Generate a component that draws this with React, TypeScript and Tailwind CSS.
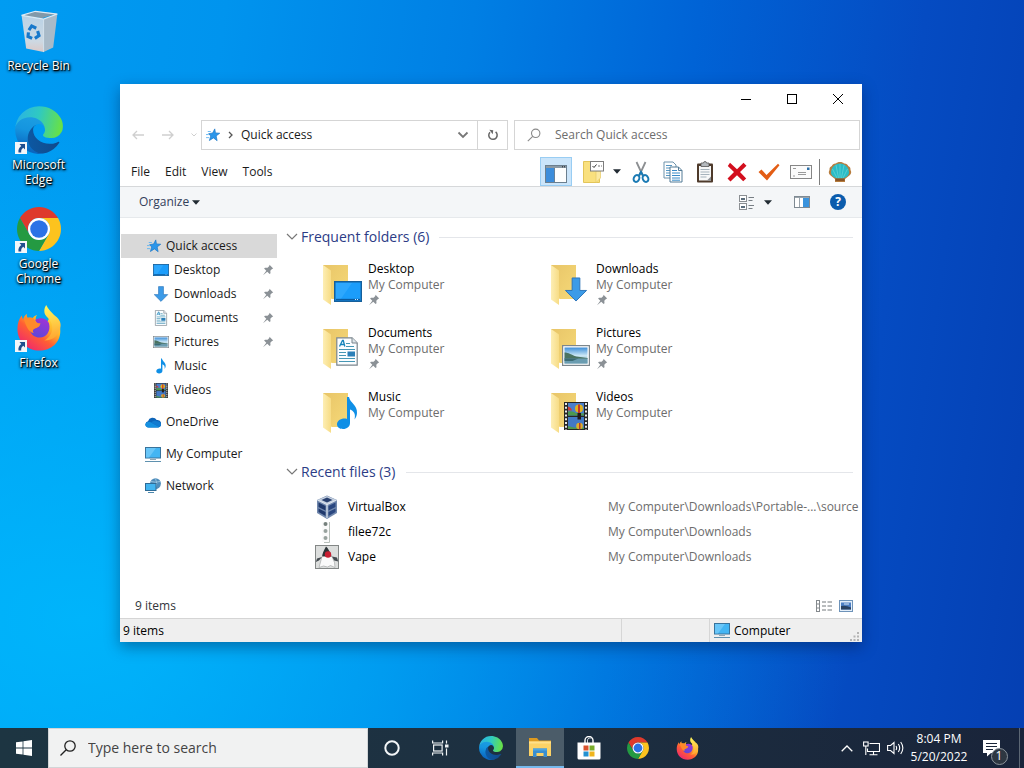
import { useId } from "react";
import type { ReactNode } from "react";

type IconProps = { className?: string };

/* ---------- Brand icons ---------- */

function EdgeIcon({ className }: IconProps) {
  const id = useId();
  return (
    <svg viewBox="4 4 257 257" className={className} aria-hidden="true">
      <defs>
        <linearGradient id={`${id}a`} x1="64" y1="177" x2="241" y2="177" gradientUnits="userSpaceOnUse">
          <stop offset="0" stopColor="#0c59a4" />
          <stop offset="1" stopColor="#114a8b" />
        </linearGradient>
        <linearGradient id={`${id}b`} x1="110" y1="70" x2="70" y2="240" gradientUnits="userSpaceOnUse">
          <stop offset="0" stopColor="#1b9de2" />
          <stop offset="0.4" stopColor="#1595df" />
          <stop offset="1" stopColor="#0a66c0" />
        </linearGradient>
        <linearGradient id={`${id}c`} x1="20" y1="70" x2="245" y2="120" gradientUnits="userSpaceOnUse">
          <stop offset="0" stopColor="#2bb5e0" />
          <stop offset="0.45" stopColor="#2fc9c2" />
          <stop offset="1" stopColor="#66e04a" />
        </linearGradient>
      </defs>
      <path fill={`url(#${id}a)`} d="M235.68 195.46a93.73 93.73 0 0 1-10.54 4.71 101.87 101.87 0 0 1-35.9 6.46c-47.32 0-88.54-32.55-88.54-74.32A31.48 31.48 0 0 1 117.13 105c-42.8 1.8-53.8 46.4-53.8 72.53 0 73.88 68.09 81.37 82.76 81.37 7.91 0 19.84-2.3 27-4.56l1.31-.44a128.34 128.34 0 0 0 66.6-52.8 4 4 0 0 0-5.32-5.64Z" />
      <path fill={`url(#${id}b)`} d="M110.34 246.34A79.2 79.2 0 0 1 87.6 225a80.72 80.72 0 0 1 29.53-120c3.12-1.47 8.45-4.13 15.54-4a32.35 32.35 0 0 1 25.69 13 31.88 31.88 0 0 1 6.36 18.66c0-.21 24.46-79.6-80-79.6-43.9 0-80 41.66-80 78.21a130.15 130.15 0 0 0 12.11 56 128 128 0 0 0 156.38 67.11 75.55 75.55 0 0 1-62.78-8Z" />
      <path fill={`url(#${id}c)`} d="M156.94 153.78c-.81 1.05-3.3 2.5-3.3 5.66 0 2.61 1.7 5.12 4.72 7.23 14.38 10 41.49 8.68 41.56 8.68a59.56 59.56 0 0 0 30.27-8.35 61.38 61.38 0 0 0 30.43-52.88c.26-22.41-8-37.31-11.34-43.91C228.09 28.76 182.35 4.7 132.61 4.7A128 128 0 0 0 4.61 130.9c.48-36.54 36.8-66.05 80-66.05 3.5 0 23.46.34 42 10.07 16.34 8.58 24.9 18.94 30.85 29.21 6.18 10.67 7.28 24.15 7.28 29.52s-2.74 13.33-7.8 19.91Z" />
    </svg>
  );
}

function ChromeIcon({ className }: IconProps) {
  return (
    <svg viewBox="0 0 48 48" className={className} aria-hidden="true">
      <path fill="#de3a2c" d="M3.22 12A24 24 0 0 1 44.78 12L24 12A12 12 0 0 0 13.61 30Z" />
      <path fill="#fcc31e" d="M44.78 12A24 24 0 0 1 24 48L34.39 30A12 12 0 0 0 24 12Z" />
      <path fill="#249a42" d="M24 48A24 24 0 0 1 3.22 12L13.61 30A12 12 0 0 0 34.39 30Z" />
      <circle cx="24" cy="24" r="12" fill="#fff" />
      <circle cx="24" cy="24" r="9.6" fill="#2b72e6" />
    </svg>
  );
}

function FirefoxIcon({ className }: IconProps) {
  const id = useId();
  return (
    <svg viewBox="0 0 48 48" className={className} aria-hidden="true">
      <defs>
        <linearGradient id={`${id}a`} x1="38" y1="6" x2="10" y2="44" gradientUnits="userSpaceOnUse">
          <stop offset="0" stopColor="#fff04a" />
          <stop offset="0.35" stopColor="#ffb52a" />
          <stop offset="0.62" stopColor="#ff5f33" />
          <stop offset="1" stopColor="#f02a6c" />
        </linearGradient>
        <linearGradient id={`${id}b`} x1="30" y1="14" x2="20" y2="34" gradientUnits="userSpaceOnUse">
          <stop offset="0" stopColor="#a033d6" />
          <stop offset="1" stopColor="#5a48d8" />
        </linearGradient>
        <linearGradient id={`${id}c`} x1="36" y1="2" x2="42" y2="40" gradientUnits="userSpaceOnUse">
          <stop offset="0" stopColor="#fff35a" />
          <stop offset="1" stopColor="#ff9a2b" />
        </linearGradient>
      </defs>
      <path fill={`url(#${id}a)`} d="M6 11c.3 1.6.8 3 1.4 4C8 12.600 9.300 10.400 11.200 9c-.1 2 .3 3.500 1.200 4.800 1.600-.5 3.500-.5 5-.2 1.200-1.600 2.800-2.700 4.600-3.100-1 1.200-1.500 2.500-1.500 3.900 2 1.500 5 1.500 7.500 3 6 2 9-4 3-12.400 5 2 8 5 9.500 8.500 2 1 4.500 5 5.300 9.500C48.500 37 38 47.500 24.500 47.500 11.500 47.500 1.500 38 1.500 25c0-5.500 1.500-10.500 4.500-14Z" />
      <path fill={`url(#${id}c)`} d="M31.500 0c-2 3-2.700 7-1 10.300 1.200 2.300 4 3.900 5.500 6.700 4 7 1.500 16-6.500 20 10 0 14.500-6 16.500-12C48.500 15 42 13 38.500 9c-2.700-2.800-5.200-5-7-9Z" />
      <path fill={`url(#${id}b)`} d="M20 15.500c6-3.500 13-1 14.500 4C36.500 27 31.500 34 25 34c-6.500 0-11-4.500-10.500-10 3 1.500 7.500.5 10-2 .4-2-3.500-2.500-4.500-6.500Z" />
      <path fill="#ff8a2a" d="M8 14c3-1.500 8-1.500 11 .5.2 3 2.200 4.200 6.500 4.500 0 2.500-2.500 3.800-5.500 5.300-2.500 1.200-3 3-1.500 5-6-1-8.500-9-10.500-15.300Z" />
    </svg>
  );
}

function RecycleIcon({ className }: IconProps) {
  const id = useId();
  return (
    <svg viewBox="0 0 48 48" className={className} aria-hidden="true">
      <defs>
        <linearGradient id={id} x1="0" y1="0" x2="0" y2="1">
          <stop offset="0" stopColor="#b9d2e6" />
          <stop offset="0.7" stopColor="#cdd9e3" />
          <stop offset="1" stopColor="#dbc9c8" />
        </linearGradient>
      </defs>
      <path d="M5 7 20 2.500 44 5l-17 5Z" fill="#8199a9" />
      <path d="M5 7 29 11v36L10 43Z" fill={`url(#${id})`} />
      <path d="M29 11 44 5.500 39.500 42 29 47Z" fill="#a9bac8" />
      <path d="M5 7 20 2.500 44 5.500 29 11Z" fill="none" stroke="#dceaf4" strokeWidth="1.300" />
      <path d="M29 11v36" stroke="#dde6ed" strokeWidth="1" />
      <g fill="none" stroke="#1778cb" strokeWidth="3.400">
        <path d="m13 23 3-4.500 5 2.500" />
        <path d="m22.500 24 1.500 5-4.500 3" />
        <path d="m16.500 32-4.500-2 .5-4.500" />
      </g>
    </svg>
  );
}

/* ---------- Shell icons ---------- */

function Star({ className }: IconProps) {
  return (
    <svg viewBox="0 0 16 16" className={className} aria-hidden="true">
      <path d="m10 1 .8 4.600 4.900.4-4.100 3 1.100 5.500-4.200-3.200-4.600 3 1.500-5.200L3 6.500l4.600-.8Z" fill="#2b96ea" stroke="#1b78c8" strokeWidth=".8" />
      <path d="M2 4h3.500M0 7.500h3M0 11h3.500" stroke="#5bb4f2" strokeWidth="1" />
    </svg>
  );
}

function Pin({ className }: IconProps) {
  return (
    <svg viewBox="0 0 12 12" className={className} aria-hidden="true">
      <path d="m7.500.8 3.700 3.700-1.200.4-1.700 1.800.2 2.500-.9.900L5.300 7.800 1 11.200l3.300-4.400-2.200-2.200.9-.9 2.600.1L7.300 2Z" fill="#8b9196" />
    </svg>
  );
}

function DesktopGlyph({ className }: IconProps) {
  return (
    <svg viewBox="0 0 28 20" preserveAspectRatio="none" className={className} aria-hidden="true">
      <rect x=".7" y=".7" width="26.600" height="18.600" fill="#1b9dfb" stroke="#155f9b" strokeWidth="1.400" />
      <path d="M2 2h16L7 17H2Z" fill="#3badff" opacity=".6" />
      <path d="M2 17.700h24" stroke="#0b5a9e" strokeWidth="1.400" />
      <path d="M21 17.700h1M23 17.700h1" stroke="#cfeaff" strokeWidth="1" />
    </svg>
  );
}

function DownGlyph({ className }: IconProps) {
  return (
    <svg viewBox="0 0 24 26" className={className} aria-hidden="true">
      <path d="M8 1h8v13h7L12 25 1 14h7Z" fill="#3c9be8" stroke="#2c74b8" strokeWidth="1" />
    </svg>
  );
}

function DocGlyph({ className }: IconProps) {
  return (
    <svg viewBox="0 0 22 29" className={className} aria-hidden="true">
      <path d="M.8.8H16l5.200 5.200v22.200H.8Z" fill="#fbfdff" stroke="#7b858d" strokeWidth="1.200" />
      <path d="M16 .8V6h5.200" fill="#dfe6ea" stroke="#7b858d" />
      <path d="m3.500 9.500 3-6h.8l1.500 6M4.800 7.500h3.500" stroke="#1583ba" strokeWidth="1.300" fill="none" />
      <path d="M10 6.500h4M10 9.500h8M3 12.500h16M3 15.500h7M3 18.500h7M3 21.500h16M3 24.500h16" stroke="#4697b5" strokeWidth="1.200" />
      <rect x="11.500" y="14.500" width="7.500" height="5" fill="#2b7fb8" />
    </svg>
  );
}

function PictureGlyph({ className }: IconProps) {
  const id = useId();
  return (
    <svg viewBox="0 0 28 21" preserveAspectRatio="none" className={className} aria-hidden="true">
      <defs>
        <linearGradient id={id} x1="0" y1="0" x2="0" y2="1">
          <stop offset="0" stopColor="#3d8ed8" />
          <stop offset=".5" stopColor="#c9e6f5" />
          <stop offset="1" stopColor="#8bb6c4" />
        </linearGradient>
      </defs>
      <rect x=".6" y=".6" width="26.800" height="19.800" fill="#fff" stroke="#7c868c" strokeWidth="1.200" />
      <rect x="2.500" y="2.500" width="23" height="16" fill={`url(#${id})`} />
      <path d="M2.500 7.500c4 0 7 2.500 12 4l11 1.500v1H2.500Z" fill="#4a7361" />
      <path d="M2.500 13.500h23v5h-23Z" fill="#6a9cb0" />
      <path d="M2.500 13.500h14l-6 2.500h-8Z" fill="#3c6b74" />
    </svg>
  );
}

function MusicGlyph({ className }: IconProps) {
  return (
    <svg viewBox="0 0 22 34" className={className} aria-hidden="true">
      <path d="M11 1h2c1 6 8.500 8 8 16-.1 2.500-1 4.500-2.500 6.500 1.500-6-1-8.500-4.500-10V27c0 3.500-3 6-7 6-3.500 0-6-1.800-6-4.700 0-3.500 3.500-5.800 7.500-5.800 1 0 1.800.1 2.500.4Z" fill="#0f8fe6" />
    </svg>
  );
}

function VideoGlyph({ className }: IconProps) {
  return (
    <svg viewBox="0 0 24 28" preserveAspectRatio="none" className={className} aria-hidden="true">
      <rect width="24" height="28" fill="#262626" />
      <rect x="4" y="1" width="16" height="12.500" fill="#4a7fcb" />
      <rect x="4" y="15" width="16" height="12" fill="#4379c6" />
      <path d="M4 9.500q5-1 8 1.500l8 .5v2H4ZM4 24l6 1.500h10V27H4Z" fill="#4d9950" />
      <path d="M4 4.500q3.500 1 4 4H4Z" fill="#ce3a34" />
      <circle cx="15" cy="6.500" r="4" fill="#e2b21f" />
      <path d="M14 2.500h2v9h-2Z" fill="#c3362b" />
      <path d="M13.500 11h3.500v6.500h-3.500Z" fill="#221a1a" />
      <circle cx="15.500" cy="24" r="3.300" fill="#ddb02b" />
      <path d="M15 21h1.500v6H15Z" fill="#b83830" />
      <path d="M2 1v27M22 1v27" stroke="#e9e9e9" strokeWidth="2" strokeDasharray="2 1.800" />
    </svg>
  );
}

function CloudGlyph({ className }: IconProps) {
  return (
    <svg viewBox="0 0 16 11" className={className} aria-hidden="true">
      <path d="M3.500 10.500A3.200 3.200 0 0 1 3 4.200 4.800 4.800 0 0 1 11.700 3 3.800 3.800 0 0 1 13 10.500Z" fill="#0d64b8" />
      <path d="M3.500 10.500C1.500 10.500 0 9 .2 7.200c1-2.800 4-3.200 6-1.700l8.300 4.500c-.5.4-1 .5-1.700.5Z" fill="#1590e0" />
      <path d="M6 5.500c2-2 4.500-2 5.700-1.300 2.300-.2 4.300 1.300 4.300 3.300 0 1.200-.6 2-1.500 2.500Z" fill="#127bd0" />
    </svg>
  );
}

function ComputerGlyph({ className }: IconProps) {
  return (
    <svg viewBox="0 0 16 15" className={className} aria-hidden="true">
      <rect x=".5" y=".5" width="15" height="10.500" fill="#43b5f3" stroke="#38739c" />
      <path d="M1 1h10L4 10.500H1Z" fill="#79cdf9" opacity=".7" />
      <path d="M5 12.500h6" stroke="#8fa7b5" />
      <path d="M0 14.500h16" stroke="#5f91af" />
    </svg>
  );
}

function NetworkGlyph({ className }: IconProps) {
  return (
    <svg viewBox="0 0 16 16" className={className} aria-hidden="true">
      <circle cx="10.500" cy="5.600" r="5.400" fill="#4f8dbb" />
      <path d="M6 3.500q4.500 1.500 9 0M10.500.5q2.500 5 0 10" stroke="#a5cbe4" strokeWidth=".8" fill="none" />
      <rect x=".5" y="5.500" width="10.500" height="7" fill="#42b4f0" stroke="#2e6b96" />
      <path d="M3 14.500h6" stroke="#4b87ad" />
    </svg>
  );
}

function FolderIcon({ children }: { children: ReactNode }) {
  const id = useId();
  return (
    <span className="relative block h-12 w-10 shrink-0">
      <svg viewBox="0 0 40 48" className="size-full" aria-hidden="true">
        <defs>
          <linearGradient id={`${id}a`} x1="0" y1="0" x2="1" y2="1">
            <stop offset="0" stopColor="#e8c568" />
            <stop offset="1" stopColor="#f6d978" />
          </linearGradient>
          <linearGradient id={`${id}b`} x1="0" y1="0" x2="1" y2="0">
            <stop offset="0" stopColor="#fdeeb4" />
            <stop offset="1" stopColor="#f7dc85" />
          </linearGradient>
        </defs>
        <path d="M1 4h25v34H10L1 34Z" fill={`url(#${id}a)`} />
        <path d="M1 4 9 9.500V44l-8-5.500Z" fill={`url(#${id}b)`} />
      </svg>
      {children}
    </span>
  );
}

function Caret({ className = "" }: IconProps) {
  return (
    <svg viewBox="0 0 8 5" className={`h-[5px] w-2 ${className}`} aria-hidden="true">
      <path d="M0 .3h8L4 4.800Z" fill="#222b33" />
    </svg>
  );
}

function GroupChevron() {
  return (
    <svg viewBox="0 0 12 8" className="h-2 w-3 shrink-0" aria-hidden="true">
      <path d="m1 1 5 5 5-5" fill="none" stroke="#777" strokeWidth="1.200" />
    </svg>
  );
}

/* ---------- Desktop ---------- */

function Shortcut({ label, icon, linked }: { label: string; icon: ReactNode; linked?: boolean }) {
  return (
    <button type="button" className="flex h-[99px] w-[77px] flex-col items-center gap-[3px] text-xs leading-[15px] text-white">
      <span className="relative flex size-12 shrink-0 items-center justify-center">
        {icon}
        {linked && (
          <svg viewBox="0 0 12 12" className="absolute bottom-0 left-0 size-3" aria-hidden="true">
            <rect width="12" height="12" fill="#f3f6f9" />
            <path d="M4.500 2H10v5.500L8.300 5.800C6.500 7 6 8.500 6.200 10.500H3.500C3 7.500 4.200 5.500 6.300 3.900Z" fill="#1f4f8f" />
          </svg>
        )}
      </span>
      <span className="w-[66px] text-center [text-shadow:1px_1px_1px_#000,1px_1px_3px_#000,0_1px_3px_rgba(0,0,0,0.8)]">{label}</span>
    </button>
  );
}

/* ---------- Explorer window ---------- */

function TitleBar() {
  return (
    <div className="flex h-[30px] items-center justify-end pr-px">
      <button type="button" aria-label="Minimize" className="flex h-full w-[46px] items-center justify-center">
        <svg viewBox="0 0 10 10" className="size-2.5"><path d="M0 5.500h10" stroke="#000" /></svg>
      </button>
      <button type="button" aria-label="Maximize" className="flex h-full w-[46px] items-center justify-center">
        <svg viewBox="0 0 10 10" className="size-2.5"><rect x=".5" y=".5" width="9" height="9" fill="none" stroke="#000" /></svg>
      </button>
      <button type="button" aria-label="Close" className="flex h-full w-[46px] items-center justify-center">
        <svg viewBox="0 0 10 10" className="size-2.5"><path d="m0 0 10 10M10 0 0 10" stroke="#000" /></svg>
      </button>
    </div>
  );
}

function AddressRow() {
  return (
    <div className="flex h-[42px] items-center pr-0.5 pl-3">
      <button type="button" aria-label="Back" className="flex w-3 justify-center">
        <svg viewBox="0 0 12 10" className="h-2.5 w-3"><path d="M12 5H1M5 1 1 5l4 4" fill="none" stroke="#cfcfcf" strokeWidth="1.300" /></svg>
      </button>
      <button type="button" aria-label="Forward" className="ml-[18px] flex w-3 justify-center">
        <svg viewBox="0 0 12 10" className="h-2.5 w-3"><path d="M0 5h11M7 1l4 4-4 4" fill="none" stroke="#cfcfcf" strokeWidth="1.300" /></svg>
      </button>
      <button type="button" aria-label="Recent locations" className="ml-4 flex w-[7px] justify-center">
        <svg viewBox="0 0 6 4" className="h-1 w-1.5"><path d="m.5.5 2.500 2.500L5.500.5" fill="none" stroke="#cfcfcf" /></svg>
      </button>
      <div className="ml-1 flex h-[30px] flex-[305_1_0%] border border-[#d5d5d5]">
        <div className="flex grow items-center pl-1">
          <Star className="size-3.5" />
          <svg viewBox="0 0 5 8" className="ml-2 h-2 w-[5px]" aria-hidden="true"><path d="m1 1 3 3-3 3" fill="none" stroke="#555" strokeWidth="1.300" /></svg>
          <a href="#quick-access" className="ml-2">Quick access</a>
          <button type="button" aria-label="Previous locations" className="mr-2 ml-auto">
            <svg viewBox="0 0 12 8" className="h-2 w-3"><path d="m1.500 1.500 4.500 4.500 4.500-4.500" fill="none" stroke="#777" strokeWidth="1.800" /></svg>
          </button>
        </div>
        <button type="button" aria-label="Refresh" className="flex w-[30px] items-center justify-center border-l border-[#d5d5d5]">
          <svg viewBox="0 0 12 12" className="size-3">
            <path d="M3 3.200A4.200 4.200 0 1 0 8.600 2.900" fill="none" stroke="#666" strokeWidth="1.500" />
            <path d="M2 1h4v4Z" fill="#666" transform="rotate(8 4 3)" />
          </svg>
        </button>
      </div>
      <div className="ml-1.5 flex h-[30px] flex-[332_1_0%] items-center border border-[#d5d5d5] pl-3">
        <svg viewBox="0 0 14 14" className="size-3.5 shrink-0" aria-hidden="true">
          <circle cx="8.700" cy="5.300" r="4.200" fill="none" stroke="#8a8a8a" strokeWidth="1.100" />
          <path d="M5.700 8.300.8 13.200" stroke="#8a8a8a" strokeWidth="1.100" />
        </svg>
        <input type="search" aria-label="Search Quick access" placeholder="Search Quick access" className="ml-3.5 min-w-0 grow bg-transparent outline-none placeholder:text-[#6d6d6d]" />
      </div>
    </div>
  );
}

function ToolButton({ label, children }: { label: string; children: ReactNode }) {
  return (
    <button type="button" aria-label={label} className="flex h-full w-8 items-center justify-center">
      {children}
    </button>
  );
}

function MenuBar() {
  return (
    <div className="flex h-[31px] items-center justify-between border-b border-[#d6d8da] pt-px pr-1.5 pl-[11px]">
      <div className="flex gap-[15px]">
        {["File", "Edit", "View", "Tools"].map((item) => (
          <button type="button" key={item}>{item}</button>
        ))}
      </div>
      <div className="flex h-[29px] items-center">
        <button type="button" aria-label="Navigation pane" aria-pressed="true" className="flex h-full w-8 items-center justify-center border border-[#99cdf3] bg-[#cbe5fa]">
          <svg viewBox="0 0 22 18" className="mt-1 h-[18px] w-[22px]">
            <rect x=".5" y=".5" width="21" height="17" fill="#fdfefe" stroke="#6b7f8f" />
            <path d="M1 2h20" stroke="#8b9aa5" strokeWidth="2" />
            <rect x="1" y="3" width="8" height="14" fill="#3c8ddb" />
            <path d="M9.500 3v14" stroke="#67829a" />
            <path d="M17 1.800h1M19 1.800h1" stroke="#222" />
          </svg>
        </button>
        <button type="button" aria-label="Folder options" className="flex h-full w-[53px] items-center pl-[11px]">
          <svg viewBox="0 0 21 22" className="h-[22px] w-[21px]">
            <path d="M.5.500h9v9h7v12H.5Z" fill="#f9e07e" stroke="#e3c559" />
            <path d="M13 10h4.500v7L13 21.500Z" fill="#fbe9a0" stroke="#e6ca65" strokeWidth=".7" />
            <rect x="7.500" y=".5" width="13" height="9.500" fill="#fff" stroke="#7d7d7d" />
            <path d="m9.500 5 1.500 1.500 2.500-3" fill="none" stroke="#333" />
            <path d="M15 5h2M18 5h1" stroke="#777" />
          </svg>
          <Caret className="ml-[9px]" />
        </button>
        <ToolButton label="Cut">
          <svg viewBox="0 0 18 22" className="h-[22px] w-[18px]">
            <path d="m4.500 1 6.500 14M13.500 1 7 15" stroke="#8c8f92" strokeWidth="1.800" />
            <ellipse cx="4.500" cy="17.500" rx="2.700" ry="3.500" fill="none" stroke="#1a7ab4" strokeWidth="2" transform="rotate(25 4.500 17.500)" />
            <ellipse cx="13.500" cy="17.500" rx="2.700" ry="3.500" fill="none" stroke="#1a7ab4" strokeWidth="2" transform="rotate(-25 13.500 17.500)" />
            <path d="M7 14.500 9 11l2 3.500" fill="none" stroke="#1a7ab4" strokeWidth="2" />
          </svg>
        </ToolButton>
        <ToolButton label="Copy">
          <svg viewBox="0 0 20 22" className="h-[22px] w-5">
            <path d="M1 1h9l3 3v13H1Z" fill="#fff" stroke="#6f93ab" />
            <path d="M3 4.500h6M3 7h8M3 9.500h8M3 12h8M3 14.500h8" stroke="#5597c4" />
            <path d="M7 6h8.500L19 9.500V21H7Z" fill="#fff" stroke="#537b96" />
            <path d="M15.500 6v3.500H19" fill="none" stroke="#537b96" />
            <path d="M9 9.500h5M9 12h8M9 14.500h8M9 17h8M9 19.200h8" stroke="#398bc7" />
          </svg>
        </ToolButton>
        <ToolButton label="Paste">
          <svg viewBox="0 0 18 22" className="h-[22px] w-[18px]">
            <rect x="1" y="2.500" width="16" height="19" rx="1" fill="#4e3a2b" />
            <rect x="3" y="5" width="12" height="14.500" fill="#f7f8f8" />
            <path d="M5 2h2.500a1.500 1.500 0 0 1 3 0H13v3.500H5Z" fill="#b4b9bd" stroke="#555" strokeWidth=".8" />
            <path d="M4.500 8.500h9M4.500 11h9M4.500 13.500h9M4.500 16h6" stroke="#a6b3bc" />
            <path d="m11 19.500 4-4v4Z" fill="#8d9195" />
          </svg>
        </ToolButton>
        <ToolButton label="Delete">
          <svg viewBox="0 0 20 20" className="size-5">
            <path d="m3 .8 7 6.500 6.500-6.500 3 3L13 10l6.200 6.500-3 2.800-6.200-6-6.500 6.200-3-3L7 10 .8 4Z" fill="#d30f1e" />
          </svg>
        </ToolButton>
        <ToolButton label="Properties">
          <svg viewBox="0 0 22 18" className="h-[18px] w-[22px]">
            <path d="M.5 9 3.500 6.500l5 5.500L20 .8l1.500 1.500L9 17.500Z" fill="#e35d14" />
          </svg>
        </ToolButton>
        <ToolButton label="Email">
          <svg viewBox="0 0 22 14" className="h-3.5 w-[22px]">
            <rect x=".5" y=".5" width="21" height="13" fill="#fbfbfb" stroke="#868686" />
            <path d="M3 3.500h3M8 7.500h8M8 9.500h8M3 11h2" stroke="#9a9a9a" />
            <rect x="17" y="2.500" width="2.500" height="2.500" fill="#2b6fa8" />
          </svg>
        </ToolButton>
        <span className="mr-1 ml-0.5 h-[26px] w-px bg-[#7f7f7f]" />
        <ToolButton label="Classic shell settings">
          <svg viewBox="0 0 24 22" className="h-[22px] w-6">
            <path d="M12 1c2 0 3 .5 4 1.500 2-.3 3.500.8 4.200 2.500 1.800.7 2.500 2.200 2.300 4 1 1.500 1 3.500-.5 5L17 18v3H7v-3L2 14C.5 12.500.5 10.500 1.500 9 1.300 7.200 2 5.700 3.800 5 4.500 3.300 6 2.200 8 2.500 9 1.500 10 1 12 1Z" fill="#b77d3e" />
            <path d="M12 2.500c5 0 9 4 9 9 0 3-3 5-6 6H9c-3-1-6-3-6-6 0-5 4-9 9-9Z" fill="#2bbcc6" />
            <path d="M12 3v14M8 4l2.500 13M16 4l-2.500 13M4.500 8 9 17M19.500 8 15 17" stroke="#63d2d6" strokeWidth=".8" />
            <path d="M7.500 17.500h9v2.500h-9Z" fill="#8a5526" />
          </svg>
        </ToolButton>
      </div>
    </div>
  );
}

function CommandBar() {
  return (
    <div className="flex h-[31px] items-center justify-between border-b border-[#e6e9ec] bg-[#f4f6f8] pr-4 pl-[19px]">
      <button type="button" className="flex items-center gap-[3px] text-[#33405a]">
        Organize
        <Caret />
      </button>
      <div className="flex items-center">
        <button type="button" aria-label="Change view" className="flex items-center">
          <svg viewBox="0 0 15 15" className="size-[15px]">
            <rect x=".5" y=".5" width="7" height="6" fill="#fff" stroke="#8b8f93" />
            <rect x=".5" y="8.500" width="7" height="6" fill="#fff" stroke="#8b8f93" />
            <path d="M2 3h4v2H2ZM2 11h4v2H2Z" fill="#5b6d7c" />
            <path d="M9.500 2.500H15M9.500 5.500h4M9.500 10.500H15M9.500 13.500h4" stroke="#777e84" />
          </svg>
          <Caret className="ml-2.5" />
        </button>
        <button type="button" aria-label="Show the preview pane" className="ml-[22px]">
          <svg viewBox="0 0 16 12" className="h-3 w-4">
            <rect x=".5" y=".5" width="15" height="11" fill="#fff" stroke="#7f8a93" />
            <path d="M1 1.500h14" stroke="#9aa4ac" />
            <path d="M5.500 2v9" stroke="#9aa4ac" />
            <rect x="9" y="2" width="6" height="9" fill="#3a93dd" />
          </svg>
        </button>
        <button type="button" aria-label="Help" className="ml-5 flex size-4 items-center justify-center rounded-full bg-[#0b5cad] text-xs font-bold text-white">
          ?
        </button>
      </div>
    </div>
  );
}

const places = [
  { name: "Desktop", pinned: true, icon: <DesktopGlyph className="h-3 w-4" /> },
  { name: "Downloads", pinned: true, icon: <DownGlyph className="h-4 w-4" /> },
  { name: "Documents", pinned: true, icon: <DocGlyph className="h-4 w-4" /> },
  { name: "Pictures", pinned: true, icon: <PictureGlyph className="h-3 w-4" /> },
  { name: "Music", pinned: false, icon: <MusicGlyph className="h-4 w-4" /> },
  { name: "Videos", pinned: false, icon: <VideoGlyph className="h-[15px] w-3.5" /> },
];

const roots = [
  { name: "OneDrive", icon: <CloudGlyph className="h-[11px] w-4" /> },
  { name: "My Computer", icon: <ComputerGlyph className="h-[15px] w-4" /> },
  { name: "Network", icon: <NetworkGlyph className="size-4" /> },
];

function Sidebar() {
  return (
    <nav aria-label="Navigation pane" className="w-[157px] shrink-0 pt-4 pl-px">
      <a href="#quick-access" className="flex h-6 items-center gap-[5px] bg-[#d9d9d9] pl-[26px]">
        <Star className="size-3.5" />
        Quick access
      </a>
      <ul>
        {places.map((place) => (
          <li key={place.name}>
            <a href={`#${place.name}`} className="flex h-6 items-center pr-[3px] pl-8">
              <span className="flex w-4 justify-center">{place.icon}</span>
              <span className="ml-[5px]">{place.name}</span>
              {place.pinned && <Pin className="ml-auto size-3" />}
            </a>
          </li>
        ))}
      </ul>
      <ul className="mt-2 flex flex-col gap-2">
        {roots.map((root) => (
          <li key={root.name}>
            <a href={`#${root.name}`} className="flex h-6 items-center gap-[5px] pl-6">
              {root.icon}
              {root.name}
            </a>
          </li>
        ))}
      </ul>
    </nav>
  );
}

const folders = [
  { name: "Desktop", pinned: true, icon: <DesktopGlyph className="absolute right-0 bottom-[7px] h-[21px] w-7" /> },
  { name: "Downloads", pinned: true, icon: <DownGlyph className="absolute right-0.5 bottom-[7px] h-[25px] w-6" /> },
  { name: "Documents", pinned: true, icon: <DocGlyph className="absolute right-1 bottom-[7px] h-[29px] w-[22px]" /> },
  { name: "Pictures", pinned: true, icon: <PictureGlyph className="absolute right-0 bottom-[7px] h-[21px] w-7" /> },
  { name: "Music", pinned: false, icon: <MusicGlyph className="absolute right-1 bottom-[7px] h-[34px] w-[22px]" /> },
  { name: "Videos", pinned: false, icon: <VideoGlyph className="absolute right-0.5 bottom-[7px] h-7 w-6" /> },
];

const files = [
  {
    name: "VirtualBox",
    path: "My Computer\\Downloads\\Portable-...\\source",
    icon: (
      <svg viewBox="0 0 24 24" className="size-6" aria-hidden="true">
        <path d="M12 .5 22 5v13l-10 6L2 18V5Z" fill="#7188ad" />
        <path d="m12 1 9.500 4L12 9.500 2.500 5Z" fill="#c6d1e0" />
        <path d="m12 2.500 5.500 2.500L12 7.500 6.500 5Z" fill="#29406f" />
        <path d="m3.500 7.500 7 3.500v4.500l-7-3.500ZM3.500 13.500l7 3.500v4l-7-4Z" fill="#20396c" />
        <path d="m13.500 11 7-3.500v4.500l-7 3.500ZM13.500 17l7-3.500v3.500l-7 4Z" fill="#2a4780" />
        <path d="m2.500 5 9.500 4.700L21.500 5M12 9.700V23" fill="none" stroke="#dde4ee" strokeWidth="1.200" />
      </svg>
    ),
  },
  {
    name: "filee72c",
    path: "My Computer\\Downloads",
    icon: (
      <svg viewBox="0 0 24 24" className="size-6" aria-hidden="true">
        <path d="M7 2h7v20H7Z" fill="#fafafa" />
        <path d="M14.500 2v20.500H9" fill="none" stroke="#b8c0bb" />
        <circle cx="10.500" cy="4" r="2" fill="#75807c" />
        <circle cx="10.500" cy="11" r="2" fill="#98a29e" />
        <circle cx="10.500" cy="18" r="2" fill="#98a29e" />
      </svg>
    ),
  },
  {
    name: "Vape",
    path: "My Computer\\Downloads",
    icon: (
      <svg viewBox="0 0 24 24" className="size-6" aria-hidden="true">
        <rect x=".5" y=".5" width="23" height="23" fill="#dcdedd" stroke="#838786" />
        <path d="M11 1.500c2 1.500 3 4 4.500 6.500l1.500 5H7c0-4.500 2-8 4-11.500Z" fill="#2d3438" />
        <path d="M7 11.500h10l2.500 6 .5 5-4.500-2-3 1.500-4-1-4.500 1.500 1.500-5.500Z" fill="#fafafa" stroke="#9a9d9d" strokeWidth=".6" />
        <path d="M7 12 2 13.500.8 17 4 15.500ZM17 11.500l5 1 1.200 4-4-1Z" fill="#444b50" />
        <circle cx="13" cy="9.500" r="3.200" fill="#c81f32" />
      </svg>
    ),
  },
];

function GroupHeading({ children }: { children: ReactNode }) {
  return (
    <h2 className="flex h-6 items-center text-sm text-[#2c3c86]">
      <GroupChevron />
      <span className="ml-[3px]">{children}</span>
      <span className="ml-2.5 h-px grow bg-[#e4e6ea]" />
    </h2>
  );
}

function FileList() {
  return (
    <main id="quick-access" className="min-w-0 grow px-[9px] pt-[7px]">
      <GroupHeading>Frequent folders (6)</GroupHeading>
      <ul className="mt-3 grid grid-cols-[repeat(auto-fill,228px)] pl-9">
        {folders.map((folder) => (
          <li key={folder.name} className="h-16">
            <button type="button" className="flex gap-1.5 text-left">
              <FolderIcon>{folder.icon}</FolderIcon>
              <span className="flex flex-col leading-4">
                <span className="text-black">{folder.name}</span>
                <span className="text-[#6d6d6d]">My Computer</span>
                {folder.pinned && <Pin className="mt-px size-3" />}
              </span>
            </button>
          </li>
        ))}
      </ul>
      <section className="mt-[7px]">
        <GroupHeading>Recent files (3)</GroupHeading>
        <table className="mt-2.5 w-full table-fixed text-left">
          <tbody>
            {files.map((file) => (
              <tr key={file.name} className="h-[25px]">
                <th scope="row" className="p-0 pl-[29px] font-normal text-black">
                  <span className="flex items-center gap-[9px]">
                    {file.icon}
                    {file.name}
                  </span>
                </th>
                <td className="w-[245px] p-0 whitespace-nowrap text-[#6d6d6d]">{file.path}</td>
              </tr>
            ))}
          </tbody>
        </table>
      </section>
    </main>
  );
}

function StatusBars() {
  return (
    <footer>
      <div className="flex h-6 items-center justify-between pr-[9px] pl-[15px] text-[#33363b]">
        9 items
        <div className="flex items-center gap-[7px]">
          <button type="button" aria-label="Details view">
            <svg viewBox="0 0 16 12" className="h-3 w-4">
              <rect x=".5" y=".5" width="3" height="11" fill="#fff" stroke="#84898d" />
              <path d="M1 4h3M1 8h3" stroke="#84898d" />
              <path d="M6 2h4M11.500 2H16M6 6h4M11.500 6H16M6 10h4M11.500 10H16" stroke="#72787c" />
            </svg>
          </button>
          <button type="button" aria-label="Large icons view">
            <svg viewBox="0 0 14 12" className="h-3 w-3.5">
              <rect x=".5" y=".5" width="13" height="11" fill="#e4effa" stroke="#6e93b9" />
              <rect x="2" y="2.500" width="10" height="7" fill="#4d7fc3" />
              <path d="M2 6q5-1 10 1.500v2H2Z" fill="#2a4262" />
              <path d="M5 4h5" stroke="#dceaf7" />
            </svg>
          </button>
        </div>
      </div>
      <div className="flex h-6 items-center border-t border-[#d5d5d5] bg-[#efefef] text-black">
        <span className="flex h-full grow items-center pl-[3px]">9 items</span>
        <span className="h-full w-[88px] border-l border-[#d6d6d6]" />
        <span className="flex h-full w-[153px] items-center justify-between border-l border-[#d6d6d6] pl-1">
          <span className="flex items-center gap-1">
            <ComputerGlyph className="h-[15px] w-4" />
            Computer
          </span>
          <svg viewBox="0 0 10 10" className="mr-0.5 size-2.5 self-end" aria-hidden="true">
            <path d="M7 0h2v2H7ZM7 3.500h2v2H7ZM7 7h2v2H7ZM3.500 3.500h2v2h-2ZM3.500 7h2v2h-2ZM0 7h2v2H0Z" fill="#b4b4b4" />
          </svg>
        </span>
      </div>
    </footer>
  );
}

function ExplorerWindow() {
  return (
    <section aria-label="Quick access" className="absolute top-[84px] right-[162px] left-[120px] bg-white text-xs leading-4 text-[#1a1a1a] shadow-[0_5px_14px_0_rgba(0,20,60,0.4)]">
      <TitleBar />
      <AddressRow />
      <MenuBar />
      <CommandBar />
      <div className="flex min-h-[376px]">
        <Sidebar />
        <FileList />
      </div>
      <StatusBars />
    </section>
  );
}

/* ---------- Taskbar ---------- */

function TaskButton({ label, active, children }: { label: string; active?: boolean; children: ReactNode }) {
  return (
    <button type="button" aria-label={label} className={`flex h-full w-12 shrink-0 items-center justify-center ${active ? "border-b-2 border-[#76b9ed] bg-[#4b5c69]" : ""}`}>
      {children}
    </button>
  );
}

function Taskbar() {
  return (
    <div className="flex h-10 shrink-0 items-center bg-linear-to-r from-[#1d3542] via-[#1d3041] to-[#19243a] text-white">
      <TaskButton label="Start">
        <svg viewBox="0 0 16 16" className="size-4">
          <path d="M0 2.300 6.600 1.400v6.200H0ZM7.400 1.300 16 0v7.600H7.400ZM0 8.400h6.600v6.200L0 13.700ZM7.400 8.400H16V16l-8.600-1.300Z" fill="#fff" />
        </svg>
      </TaskButton>
      <div className="flex h-full w-80 items-center gap-3 border border-[#d2d5d7] bg-[#f1f2f2] pl-[11px]">
        <svg viewBox="0 0 16 16" className="size-4 shrink-0" aria-hidden="true">
          <circle cx="10" cy="6" r="5.200" fill="none" stroke="#222" strokeWidth="1.300" />
          <path d="M6.200 9.800.5 15.500" stroke="#222" strokeWidth="1.300" />
        </svg>
        <input type="search" aria-label="Type here to search" placeholder="Type here to search" className="min-w-0 grow bg-transparent text-sm text-black outline-none placeholder:text-[#444]" />
      </div>
      <TaskButton label="Cortana">
        <svg viewBox="0 0 16 16" className="size-4"><circle cx="8" cy="8" r="6.700" fill="none" stroke="#f2f5f7" strokeWidth="2" /></svg>
      </TaskButton>
      <TaskButton label="Task view">
        <svg viewBox="0 0 17 16" className="h-4 w-[17px]" fill="none" stroke="#eef2f4" strokeWidth="1.200">
          <path d="M.6.500v2.500h10V.500M.6 15.500V13h10v2.500" />
          <rect x="1.600" y="5" width="8.500" height="6" />
          <path d="M14.500.5v3M14.500 8.500v7" />
          <path d="M13 4.500h3.500V7.500H13Z" fill="#eef2f4" stroke="none" />
        </svg>
      </TaskButton>
      <div className="ml-[3px] flex h-full gap-px">
        <TaskButton label="Microsoft Edge"><EdgeIcon className="size-6" /></TaskButton>
        <TaskButton label="File Explorer" active>
          <svg viewBox="0 0 22 20" className="h-5 w-[22px]">
            <path d="M0 1h8l2 2.500h12v3H0Z" fill="#dd9a20" />
            <path d="M0 4.500h22V19H0Z" fill="#fcd266" />
            <path d="M0 4.500h22v2H0Z" fill="#ffe08a" />
            <path d="M4 11.500h14V20h-3.500v-4h-7v4H4Z" fill="#3a8fd0" />
            <path d="M4 11.500h14v2H4Z" fill="#4ea5e0" />
          </svg>
        </TaskButton>
        <TaskButton label="Microsoft Store">
          <svg viewBox="0 0 24 24" className="size-6">
            <path d="M8 7V4.500a4 4 0 0 1 8 0V7" fill="none" stroke="#fff" strokeWidth="1.400" />
            <path d="M10.500 7V4a2.500 2.500 0 0 1 4-1.500" fill="none" stroke="#c9d2d8" strokeWidth="1" />
            <path d="M.5 6.500h23V22a1.500 1.500 0 0 1-1.500 1.500H2A1.500 1.500 0 0 1 .5 22Z" fill="#fff" />
            <path d="M6.500 9.500h5v5h-5Z" fill="#d8522e" />
            <path d="M12.500 9.500h5v5h-5Z" fill="#79ac2b" />
            <path d="M6.500 15.500h5v5h-5Z" fill="#2391d1" />
            <path d="M12.500 15.500h5v5h-5Z" fill="#f0b41d" />
          </svg>
        </TaskButton>
        <TaskButton label="Google Chrome"><ChromeIcon className="size-[22px]" /></TaskButton>
        <TaskButton label="Firefox"><FirefoxIcon className="size-[23px]" /></TaskButton>
      </div>
      <div className="ml-auto flex h-full items-center">
        <button type="button" aria-label="Show hidden icons" className="flex w-6 justify-center">
          <svg viewBox="0 0 12 7" className="h-[7px] w-3"><path d="m.7 6.300 5.300-5.300 5.300 5.300" fill="none" stroke="#fff" strokeWidth="1.300" /></svg>
        </button>
        <button type="button" aria-label="Network" className="flex w-6 justify-center">
          <svg viewBox="0 0 17 15" className="h-[15px] w-[17px]" fill="none" stroke="#fff" strokeWidth="1.100">
            <path d="M6.500 2.500h10v8h-12V7.500M10.500 10.500v3M6.500 13.700h8" />
            <rect x=".6" y="1" width="4.500" height="4" />
            <path d="M2.800 5v9" />
          </svg>
        </button>
        <button type="button" aria-label="Volume" className="flex w-6 justify-center">
          <svg viewBox="0 0 17 14" className="h-3.5 w-[17px]" fill="none" stroke="#fff" strokeWidth="1.100">
            <path d="M.6 4.500h3L7 1.500v11l-3.400-3h-3Z" />
            <path d="M9 5q1.300 2 0 4M11.300 3q2.800 4 0 8M13.700 1q4.300 6 0 12" />
          </svg>
        </button>
        <button type="button" className="w-16 text-center text-xs leading-[18px]">
          8:04 PM
          <br />
          5/20/2022
        </button>
        <button type="button" aria-label="1 new notification" className="flex w-11 justify-center pr-1">
          <span className="relative">
            <svg viewBox="0 0 17 17" className="size-[17px]" aria-hidden="true">
              <path d="M0 0h17v13H8l-4 3.500V13H0Z" fill="#fff" />
              <path d="M3 3.500h11M3 6.500h11M3 9.500h7" stroke="#1a2538" strokeWidth="1.200" />
            </svg>
            <span className="absolute -right-2 -bottom-2 flex size-[17px] items-center justify-center rounded-full border border-[#8b939b] bg-[#2e3742] text-xs leading-none">1</span>
          </span>
        </button>
        <button type="button" aria-label="Show desktop" className="ml-1 h-full w-[5px] border-l border-[#5c6774]" />
      </div>
    </div>
  );
}

export default function App() {
  return (
    <div className="flex min-h-screen flex-col bg-[linear-gradient(98deg,#009cf2_0%,#0094ee_20%,#007fe4_42%,#0063d6_62%,#054bc2_82%,#053fb2_100%)] font-['Open_Sans','Noto_Sans',sans-serif]">
      <div className="relative min-h-[670px] grow overflow-hidden bg-[radial-gradient(ellipse_at_8%_85%,rgba(0,190,255,0.75)_0%,rgba(0,190,255,0.4)_28%,rgba(0,190,255,0)_58%)]">
        <div className="flex w-[77px] flex-col pt-[7px]">
          <Shortcut label="Recycle Bin" icon={<RecycleIcon className="size-11" />} />
          <Shortcut label="Microsoft Edge" linked icon={<EdgeIcon className="size-12" />} />
          <Shortcut label="Google Chrome" linked icon={<ChromeIcon className="size-11" />} />
          <Shortcut label="Firefox" linked icon={<FirefoxIcon className="size-[46px]" />} />
        </div>
        <ExplorerWindow />
      </div>
      <Taskbar />
    </div>
  );
}
